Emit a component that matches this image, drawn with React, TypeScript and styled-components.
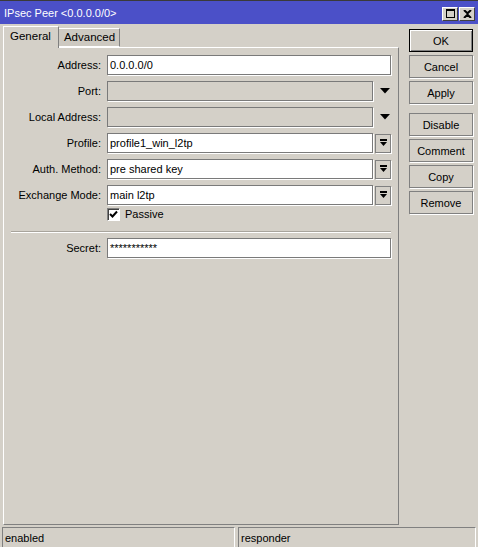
import React from "react";
import styled, {createGlobalStyle} from "styled-components";

const GlobalStyle = createGlobalStyle`
    html, body {
        margin: 0;
        padding: 0;
        width: 478px;
        height: 547px;
        overflow: hidden;
        background: #d4d0c8;
    }
    * {
        box-sizing: border-box;
    }
`;

const MaxIcon = () => (
    <svg width="9" height="9" viewBox="0 0 9 9">
        <rect x="0.5" y="0.5" width="8" height="8" fill="none" stroke="#000"/>
        <rect x="0" y="0" width="9" height="2" fill="#000"/>
    </svg>
);

const CloseIcon = () => (
    <svg width="9" height="8" viewBox="0 0 9 8">
        <path d="M1 0 L4.5 3.3 L8 0 M1 8 L4.5 4.7 L8 8" stroke="#000" strokeWidth="2" fill="none"/>
    </svg>
);

const DropIcon = () => (
    <svg width="7" height="8" viewBox="0 0 7 8">
        <rect x="0" y="0" width="7" height="2" fill="#000"/>
        <polygon points="0,3 7,3 3.5,7" fill="#000"/>
    </svg>
);

const TriangleIcon = () => (
    <svg width="10" height="6" viewBox="0 0 10 6">
        <polygon points="0,0 10,0 5,5.5" fill="#000"/>
    </svg>
);

const CheckIcon = () => (
    <svg width="9" height="9" viewBox="0 0 9 9">
        <path d="M1 4 L3.5 6.5 L8 1.5" stroke="#000" strokeWidth="2" fill="none"/>
    </svg>
);

interface FieldProps {
    label: string;
    value?: string;
    disabled?: boolean;
    trailing?: "drop" | "arrow";
}

const Field: React.FC<FieldProps> = ({label, value, disabled, trailing}) => (
    <Row>
        <Label>{label}:</Label>
        <Control>
            <Input $disabled={disabled}>{value}</Input>
            {trailing === "drop" && (
                <DropButton><DropIcon/></DropButton>
            )}
            {trailing === "arrow" && (
                <ArrowSlot><TriangleIcon/></ArrowSlot>
            )}
        </Control>
    </Row>
);

const App: React.FC = () => {
    return (
        <Window>
            <GlobalStyle/>
            <TitleBar>
                <Title>IPsec Peer &lt;0.0.0.0/0&gt;</Title>
                <TitleButtons>
                    <TitleButton><MaxIcon/></TitleButton>
                    <TitleButton><CloseIcon/></TitleButton>
                </TitleButtons>
            </TitleBar>

            <Body>
                <Main>
                    <Tabs>
                        <Tab $active>General</Tab>
                        <Tab>Advanced</Tab>
                    </Tabs>
                    <Panel>
                        <Field label="Address" value="0.0.0.0/0"/>
                        <Field label="Port" disabled trailing="arrow"/>
                        <Field label="Local Address" disabled trailing="arrow"/>
                        <Field label="Profile" value="profile1_win_l2tp" trailing="drop"/>
                        <Field label="Auth. Method" value="pre shared key" trailing="drop"/>
                        <Field label="Exchange Mode" value="main l2tp" trailing="drop"/>
                        <CheckRow>
                            <CheckBox><CheckIcon/></CheckBox>
                            <span>Passive</span>
                        </CheckRow>
                        <Separator/>
                        <Field label="Secret" value="***********"/>
                    </Panel>
                </Main>

                <Side>
                    <Button $default>OK</Button>
                    <Button>Cancel</Button>
                    <Button>Apply</Button>
                    <ButtonGap/>
                    <Button>Disable</Button>
                    <Button>Comment</Button>
                    <Button>Copy</Button>
                    <Button>Remove</Button>
                </Side>
            </Body>

            <StatusBar>
                <StatusField $width={233}>enabled</StatusField>
                <StatusField $width={238}>responder</StatusField>
            </StatusBar>
        </Window>
    );
};

const Window = styled.div`
    width: 478px;
    height: 547px;
    display: flex;
    flex-direction: column;
    background: #d4d0c8;
    font-family: "Liberation Sans", Arial, sans-serif;
    font-size: 11px;
    color: #000;
`;

const TitleBar = styled.div`
    height: 24px;
    flex-shrink: 0;
    display: flex;
    align-items: center;
    justify-content: space-between;
    background: #4b50c8;
    border-top: 1px solid #3a3a3a;
    padding: 0 3px 0 4px;
`;

const Title = styled.div`
    color: #fff;
    font-size: 11px;
    white-space: nowrap;
`;

const TitleButtons = styled.div`
    display: flex;
    gap: 1px;
    margin-top: 2px;
`;

const TitleButton = styled.div`
    width: 16px;
    height: 14px;
    display: flex;
    align-items: center;
    justify-content: center;
    background: #d4d0c8;
    border: 1px solid;
    border-color: #fff #404040 #404040 #fff;
`;

const Body = styled.div`
    flex: 1;
    display: flex;
    min-height: 0;
`;

const Main = styled.div`
    width: 399px;
    display: flex;
    flex-direction: column;
    padding: 2px 0 1px 3px;
`;

const Tabs = styled.div`
    display: flex;
    align-items: flex-start;
    height: 22px;
    position: relative;
    z-index: 1;
    margin-bottom: -1px;
`;

const Tab = styled.div<{ $active?: boolean }>`
    height: ${props => props.$active ? "22px" : "19px"};
    margin-top: ${props => props.$active ? "0" : "2px"};
    padding: ${props => props.$active ? "3px 7px 0 6px" : "2px 4px 0 5px"};
    background: ${props => props.$active ? "#d4d0c8" : "#cdc9c1"};
    border-style: solid;
    border-width: ${props => props.$active ? "1px 1px 0 1px" : "1px 1px 1px 0"};
    border-color: #fff #808080 #fff #fff;
    font-size: 11.5px;
    white-space: nowrap;
`;

const Panel = styled.div`
    flex: 1;
    display: flex;
    flex-direction: column;
    border: 1px solid;
    border-color: #fff #808080 #808080 #fff;
    padding: 7px 7px 0 0;
`;

const Row = styled.div`
    display: flex;
    align-items: center;
    height: 20px;
    margin-bottom: 6px;
`;

const Label = styled.div`
    width: 97px;
    margin-right: 6px;
    text-align: right;
    white-space: nowrap;
`;

const Control = styled.div`
    flex: 1;
    display: flex;
    align-items: center;
    gap: 2px;
    height: 100%;
`;

const Input = styled.div<{ $disabled?: boolean }>`
    flex: 1;
    height: 100%;
    display: flex;
    align-items: center;
    padding-left: 2px;
    background: ${props => props.$disabled ? "#d4d0c8" : "#fff"};
    border: 1px solid #7a7a7a;
    box-shadow: 1px 1px 0 #fff;
    white-space: nowrap;
    overflow: hidden;
`;

const DropButton = styled.div`
    width: 16px;
    height: 19px;
    display: flex;
    align-items: center;
    justify-content: center;
    background: #d4d0c8;
    border: 1px solid #808080;
    box-shadow: 1px 1px 0 #fff;
`;

const ArrowSlot = styled.div`
    width: 16px;
    display: flex;
    align-items: center;
    justify-content: center;
    padding-left: 3px;
`;

const CheckRow = styled.div`
    display: flex;
    align-items: center;
    gap: 5px;
    height: 14px;
    margin: -4px 0 0 103px;
`;

const CheckBox = styled.div`
    width: 13px;
    height: 13px;
    display: flex;
    align-items: center;
    justify-content: center;
    background: #fff;
    border: 1px solid;
    border-color: #808080 #fff #fff #808080;
    box-shadow: inset 1px 1px 0 #404040;
`;

const Separator = styled.div`
    height: 2px;
    margin: 10px 0 5px 7px;
    border-top: 1px solid #a8a49c;
    border-bottom: 1px solid #fff;
`;

const Side = styled.div`
    width: 64px;
    margin-left: 10px;
    padding-top: 5px;
    display: flex;
    flex-direction: column;
    gap: 3px;
`;

const Button = styled.div<{ $default?: boolean }>`
    height: 23px;
    display: flex;
    align-items: center;
    justify-content: center;
    font-size: 11px;
    background: #d4d0c8;
    border: 1px solid ${props => props.$default ? "#000" : "#808080"};
    box-shadow: ${props => props.$default
            ? "inset 1px 1px 0 #fff, inset -1px -1px 0 #808080"
            : "1px 1px 0 #fff"};
`;

const ButtonGap = styled.div`
    height: 3px;
`;

const StatusBar = styled.div`
    height: 21px;
    flex-shrink: 0;
    display: flex;
    gap: 3px;
    padding: 1px 2px 0 2px;
`;

const StatusField = styled.div<{ $width: number }>`
    width: ${props => props.$width}px;
    height: 20px;
    display: flex;
    align-items: center;
    padding-left: 2px;
    border-style: solid;
    border-width: 1px 1px 0 1px;
    border-color: #808080 #fff #fff #808080;
`;

export default App;
